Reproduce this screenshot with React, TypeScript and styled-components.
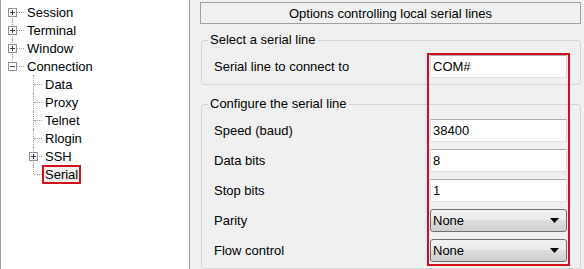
import React from "react";
import styled, { createGlobalStyle } from "styled-components";

const GlobalStyle = createGlobalStyle`
  html, body { margin: 0; padding: 0; }
  body {
    background: #f0f0f0;
    font-family: "Liberation Sans", Arial, sans-serif;
    font-size: 13px;
    color: #000;
  }
`;

const Frame = styled.div`
  display: flex;
  width: 584px;
  height: 269px;
  overflow: hidden;
`;

const TreePane = styled.div`
  flex: none;
  width: 190px;
  box-sizing: border-box;
  background: #fff;
  border-left: 1px solid #a0a0a0;
  border-right: 1px solid #a0a0a0;
  padding-top: 3px;
  margin-left: 0;
`;

const TreeRow = styled.div<{ $indent: number }>`
  display: flex;
  align-items: center;
  height: 18px;
  padding-left: ${(p) => p.$indent}px;
  margin-left: -1px;
`;

const Branch = styled.div<{ $w: number; $first?: boolean; $last?: boolean }>`
  position: relative;
  flex: none;
  width: ${(p) => p.$w}px;
  height: 18px;
  &::before {
    content: "";
    position: absolute;
    left: 12px;
    top: ${(p) => (p.$first ? 9 : 0)}px;
    bottom: ${(p) => (p.$last ? 9 : 0)}px;
    border-left: 1px dotted #a0a0a0;
  }
  &::after {
    content: "";
    position: absolute;
    left: 13px;
    right: 0;
    top: 9px;
    border-top: 1px dotted #a0a0a0;
  }
`;

const ExpanderIcon = styled.svg`
  position: absolute;
  left: 8px;
  top: 5px;
  z-index: 1;
`;

const NodeLabel = styled.span<{ $selected?: boolean }>`
  display: inline-block;
  line-height: 15px;
  padding: 0 1px;
  border: 2px solid ${(p) => (p.$selected ? "#d0101c" : "transparent")};
  background: ${(p) => (p.$selected ? "#f2f2f2" : "transparent")};
  white-space: nowrap;
`;

const RightPane = styled.div`
  position: relative;
  flex: 1;
  display: flex;
  flex-direction: column;
  padding: 2px 3px 0 10px;
`;

const Header = styled.div`
  height: 22px;
  box-sizing: border-box;
  border: 1px solid #a0a0a0;
  display: flex;
  align-items: center;
  justify-content: center;
  flex: none;
`;

const Group = styled.fieldset<{ $gap: number }>`
  margin: ${(p) => p.$gap}px 0 0 1px;
  padding: 0 13px 6px 6px;
  border: 1px solid #d5d5d5;
  border-radius: 3px;
  min-width: 0;
  flex: none;
`;

const Legend = styled.legend`
  padding: 0 2px;
  line-height: 16px;
`;

const Rows = styled.div`
  display: flex;
  flex-direction: column;
  gap: 7px;
  padding-top: 7px;
`;

const Row = styled.div`
  display: flex;
  align-items: center;
  justify-content: space-between;
  padding-left: 6px;
  height: 23px;
`;

const FieldLabel = styled.span`
  white-space: nowrap;
`;

const TextField = styled.input`
  width: 137px;
  height: 23px;
  box-sizing: border-box;
  margin: 0;
  border: 1px solid #dbdfe6;
  border-top-color: #abadb3;
  border-left-color: #e2e3ea;
  background: #fff;
  padding: 0 2px;
  font: inherit;
  color: #000;
  outline: none;
`;

const Combo = styled.div`
  width: 137px;
  height: 23px;
  box-sizing: border-box;
  border: 1px solid #707070;
  border-radius: 3px;
  background: linear-gradient(#f2f2f2 0%, #ebebeb 45%, #dddddd 50%, #cfcfcf 100%);
  display: flex;
  align-items: center;
  justify-content: space-between;
  padding: 0 7px 0 2px;
`;

const Highlight = styled.div`
  position: absolute;
  left: 237px;
  top: 53px;
  width: 143px;
  height: 213px;
  box-sizing: border-box;
  border: 2px solid #d0101c;
  pointer-events: none;
`;

function Expander({ open }: { open: boolean }) {
  return (
    <ExpanderIcon width="9" height="9" viewBox="0 0 9 9">
      <rect x="0.5" y="0.5" width="8" height="8" fill="#fff" stroke="#919191" />
      <line x1="2" y1="4.5" x2="7" y2="4.5" stroke="#404040" />
      {!open && <line x1="4.5" y1="2" x2="4.5" y2="7" stroke="#404040" />}
    </ExpanderIcon>
  );
}

type Node = {
  label: string;
  level: number;
  expander?: "open" | "closed";
  first?: boolean;
  last?: boolean;
  selected?: boolean;
};

const nodes: Node[] = [
  { label: "Session", level: 0, expander: "closed", first: true },
  { label: "Terminal", level: 0, expander: "closed" },
  { label: "Window", level: 0, expander: "closed" },
  { label: "Connection", level: 0, expander: "open", last: true },
  { label: "Data", level: 1 },
  { label: "Proxy", level: 1 },
  { label: "Telnet", level: 1 },
  { label: "Rlogin", level: 1 },
  { label: "SSH", level: 1, expander: "closed" },
  { label: "Serial", level: 1, last: true, selected: true },
];

function Arrow() {
  return (
    <svg width="9" height="5" viewBox="0 0 9 5">
      <path d="M0 0 H9 L4.5 5 Z" fill="#000" />
    </svg>
  );
}

export default function App() {
  return (
    <>
      <GlobalStyle />
      <Frame>
        <TreePane>
          {nodes.map((n) => (
            <TreeRow key={n.label} $indent={n.level === 0 ? 0 : 21}>
              <Branch $w={n.level === 0 ? 24 : 21} $first={n.first} $last={n.last}>
                {n.expander && <Expander open={n.expander === "open"} />}
              </Branch>
              <NodeLabel $selected={n.selected}>{n.label}</NodeLabel>
            </TreeRow>
          ))}
        </TreePane>
        <RightPane>
          <Header>Options controlling local serial lines</Header>
          <Group $gap={8}>
            <Legend>Select a serial line</Legend>
            <Rows>
              <Row>
                <FieldLabel>Serial line to connect to</FieldLabel>
                <TextField readOnly defaultValue="COM#" />
              </Row>
            </Rows>
          </Group>
          <Group $gap={11}>
            <Legend>Configure the serial line</Legend>
            <Rows>
              <Row>
                <FieldLabel>Speed (baud)</FieldLabel>
                <TextField readOnly defaultValue="38400" />
              </Row>
              <Row>
                <FieldLabel>Data bits</FieldLabel>
                <TextField readOnly defaultValue="8" />
              </Row>
              <Row>
                <FieldLabel>Stop bits</FieldLabel>
                <TextField readOnly defaultValue="1" />
              </Row>
              <Row>
                <FieldLabel>Parity</FieldLabel>
                <Combo>
                  <span>None</span>
                  <Arrow />
                </Combo>
              </Row>
              <Row>
                <FieldLabel>Flow control</FieldLabel>
                <Combo>
                  <span>None</span>
                  <Arrow />
                </Combo>
              </Row>
            </Rows>
          </Group>
          <Highlight />
        </RightPane>
      </Frame>
    </>
  );
}
